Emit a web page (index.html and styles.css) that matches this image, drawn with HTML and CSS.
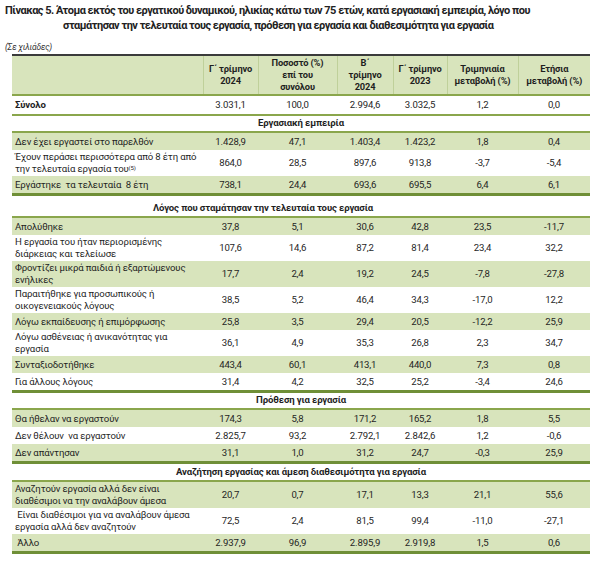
FILE: index.html
```html
<!DOCTYPE html>
<html lang="el">
<head>
<meta charset="utf-8">
<link rel="stylesheet" href="styles.css">
</head>
<body>
<div class="page">
  <h1 class="title"><span class="t1">Πίνακας 5. Άτομα εκτός του εργατικού δυναμικού, ηλικίας κάτω των 75 ετών, κατά εργασιακή εμπειρία, λόγο που</span><span class="t2">σταμάτησαν την τελευταία τους εργασία, πρόθεση για εργασία και διαθεσιμότητα για εργασία</span></h1>
  <div class="unit">(Σε χιλιάδες)</div>
  <table class="tbl">
    <colgroup>
      <col class="c1"><col class="c2"><col class="c3"><col class="c4"><col class="c5"><col class="c6"><col class="c7">
    </colgroup>
    <thead>
      <tr class="head">
        <th></th>
        <th>Γ΄ τρίμηνο<br>2024</th>
        <th>Ποσοστό (%)<br>επί του<br>συνόλου</th>
        <th>Β΄<br>τρίμηνο<br>2024</th>
        <th>Γ΄ τρίμηνο<br>2023</th>
        <th>Τριμηνιαία<br>μεταβολή (%)</th>
        <th>Ετήσια<br>μεταβολή (%)</th>
      </tr>
    </thead>
    <tbody>
      <tr class="total"><td class="lbl">Σύνολο</td><td>3.031,1</td><td>100,0</td><td>2.994,6</td><td>3.032,5</td><td>1,2</td><td>0,0</td></tr>
      <tr class="sec"><td colspan="7">Εργασιακή εμπειρία</td></tr>
      <tr class="g"><td class="lbl">Δεν έχει εργαστεί στο παρελθόν</td><td>1.428,9</td><td>47,1</td><td>1.403,4</td><td>1.423,2</td><td>1,8</td><td>0,4</td></tr>
      <tr><td class="lbl">Έχουν περάσει περισσότερα από 8 έτη από την τελευταία εργασία του<sup>(5)</sup></td><td>864,0</td><td>28,5</td><td>897,6</td><td>913,8</td><td>-3,7</td><td>-5,4</td></tr>
      <tr class="g end"><td class="lbl">Εργάστηκε &nbsp;τα τελευταία &nbsp;8 έτη</td><td>738,1</td><td>24,4</td><td>693,6</td><td>695,5</td><td>6,4</td><td>6,1</td></tr>
      <tr class="sec off"><td colspan="7">Λόγος που σταμάτησαν την τελευταία τους εργασία</td></tr>
      <tr class="g"><td class="lbl">Απολύθηκε</td><td>37,8</td><td>5,1</td><td>30,6</td><td>42,8</td><td>23,5</td><td>-11,7</td></tr>
      <tr><td class="lbl">Η εργασία του ήταν περιορισμένης διάρκειας και τελείωσε</td><td>107,6</td><td>14,6</td><td>87,2</td><td>81,4</td><td>23,4</td><td>32,2</td></tr>
      <tr class="g"><td class="lbl">Φροντίζει μικρά παιδιά ή εξαρτώμενους ενήλικες</td><td>17,7</td><td>2,4</td><td>19,2</td><td>24,5</td><td>-7,8</td><td>-27,8</td></tr>
      <tr><td class="lbl">Παραιτήθηκε για προσωπικούς ή οικογενειακούς λόγους</td><td>38,5</td><td>5,2</td><td>46,4</td><td>34,3</td><td>-17,0</td><td>12,2</td></tr>
      <tr class="g"><td class="lbl">Λόγω εκπαίδευσης ή επιμόρφωσης</td><td>25,8</td><td>3,5</td><td>29,4</td><td>20,5</td><td>-12,2</td><td>25,9</td></tr>
      <tr><td class="lbl">Λόγω ασθένειας ή ανικανότητας για εργασία</td><td>36,1</td><td>4,9</td><td>35,3</td><td>26,8</td><td>2,3</td><td>34,7</td></tr>
      <tr class="g"><td class="lbl">Συνταξιοδοτήθηκε</td><td>443,4</td><td>60,1</td><td>413,1</td><td>440,0</td><td>7,3</td><td>0,8</td></tr>
      <tr class="end"><td class="lbl">Για άλλους λόγους</td><td>31,4</td><td>4,2</td><td>32,5</td><td>25,2</td><td>-3,4</td><td>24,6</td></tr>
      <tr class="sec"><td colspan="7">Πρόθεση για εργασία</td></tr>
      <tr class="g"><td class="lbl">Θα ήθελαν να εργαστούν</td><td>174,3</td><td>5,8</td><td>171,2</td><td>165,2</td><td>1,8</td><td>5,5</td></tr>
      <tr><td class="lbl">Δεν θέλουν &nbsp;να εργαστούν</td><td>2.825,7</td><td>93,2</td><td>2.792,1</td><td>2.842,6</td><td>1,2</td><td>-0,6</td></tr>
      <tr class="g end"><td class="lbl">Δεν απάντησαν</td><td>31,1</td><td>1,0</td><td>31,2</td><td>24,7</td><td>-0,3</td><td>25,9</td></tr>
      <tr class="sec mid"><td colspan="7">Αναζήτηση εργασίας και άμεση διαθεσιμότητα για εργασία</td></tr>
      <tr class="g"><td class="lbl">Αναζητούν εργασία αλλά δεν είναι διαθέσιμοι να την αναλάβουν άμεσα</td><td>20,7</td><td>0,7</td><td>17,1</td><td>13,3</td><td>21,1</td><td>55,6</td></tr>
      <tr><td class="lbl">&nbsp;Είναι διαθέσιμοι για να αναλάβουν άμεσα εργασία αλλά δεν αναζητούν</td><td>72,5</td><td>2,4</td><td>81,5</td><td>99,4</td><td>-11,0</td><td>-27,1</td></tr>
      <tr class="g end"><td class="lbl">&nbsp;Άλλο</td><td>2.937,9</td><td>96,9</td><td>2.895,9</td><td>2.919,8</td><td>1,5</td><td>0,6</td></tr>
    </tbody>
  </table>
</div>
</body>
</html>
```
FILE: styles.css
```css
html, body {
  margin: 0;
  padding: 0;
  background: #ffffff;
}
.page {
  width: 600px;
  font-family: Roboto, "Noto Sans", sans-serif;
  color: #1f1f1f;
}
.title {
  margin: 0;
  padding: 3px 0 0 5px;
  font-size: 11px;
  letter-spacing: -0.5px;
  line-height: 15px;
  font-weight: 700;
  color: #222;
}
.t1, .t2 {
  display: block;
  white-space: nowrap;
}
.t2 {
  padding-left: 58px;
}
.unit {
  margin: 9px 0 0 5px;
  font-size: 8.5px;
  font-style: italic;
  line-height: 10px;
  letter-spacing: -0.2px;
  color: #333;
}
.tbl {
  margin: 2px 0 0 12px;
  border-collapse: collapse;
  table-layout: fixed;
  width: 578px;
  font-size: 9.6px;
  letter-spacing: -0.15px;
  line-height: 12px;
}
.c1 { width: 191px; }
.c2 { width: 55px; }
.c3 { width: 79px; }
.c4 { width: 56px; }
.c5 { width: 54px; }
.c6 { width: 71px; }
.c7 { width: 72px; }
.head th {
  background: #d8e4bc;
  font-weight: 700;
  text-align: center;
  vertical-align: middle;
  height: 38px;
  padding: 0;
  border-top: 2px solid #3b3b3b;
  border-bottom: 2px solid #8aa64c;
  border-left: 1px solid #bfd09a;
  font-size: 9.3px;
  line-height: 12px;
}
.head th:first-child { border-left: none; }
.tbl td {
  padding: 1px 0;
  text-align: center;
  vertical-align: middle;
  height: 15px;
}
.tbl td.lbl {
  text-align: left;
  padding-left: 3px;
}
.total td {
  height: 16px;
  border-bottom: 2px solid #8aa64c;
}
.total td.lbl {
  font-weight: 700;
}
.sec td {
  font-weight: 700;
  text-align: center;
  vertical-align: bottom;
  height: 13px;
  padding: 0 0 2px 0;
  border-bottom: 2px solid #8aa64c;
}
.off td {
  padding-top: 5px;
  padding-right: 76px;
}
.mid td {
  padding-top: 1px;
}
.g td {
  background: #d8e4bc;
}
.end td {
  border-bottom: 3px solid #6f8f37;
}
sup {
  font-size: 6px;
  line-height: 6px;
  vertical-align: 2px;
}
```
